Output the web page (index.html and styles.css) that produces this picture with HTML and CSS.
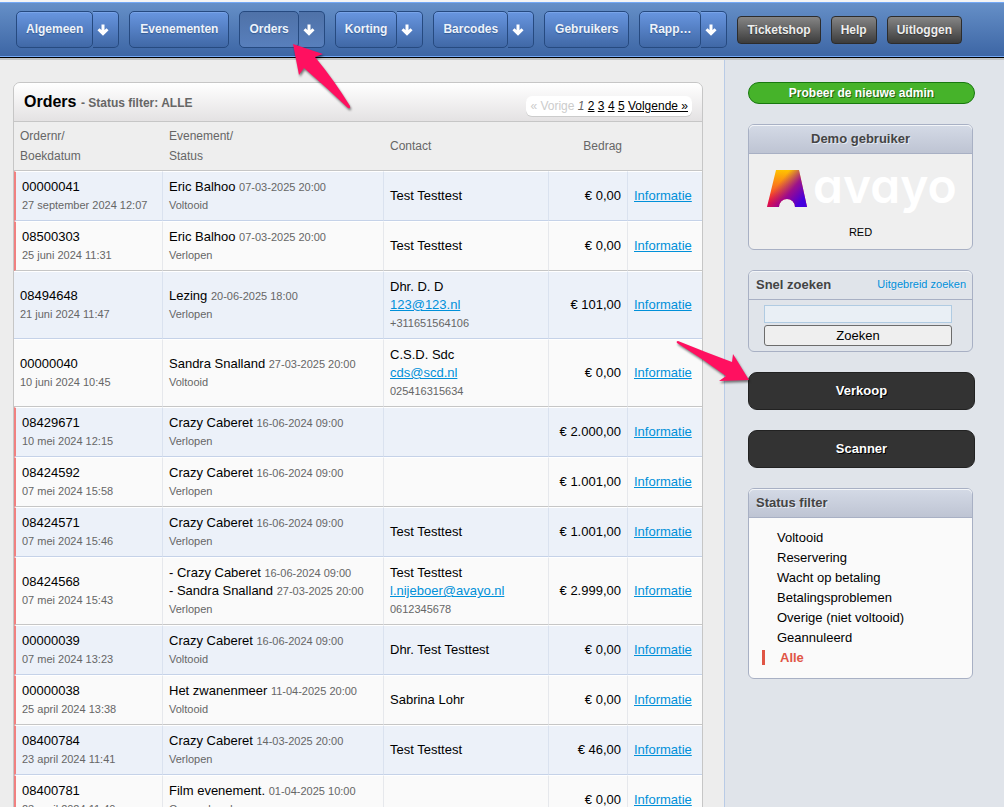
FILE: index.html
```html
<!DOCTYPE html>
<html lang="nl">
<head>
    <meta charset="UTF-8">
    <meta name="viewport" content="width=device-width, initial-scale=1.0">
    <title>Orders</title>
    <link rel="stylesheet" href="styles.css">
</head>
<body>
    <svg class="symbols" width="0" height="0">
        <symbol id="down" viewBox="0 0 12 12">
            <path d="M6 0.500v9M1.500 5.200L6 9.600L10.500 5.200" fill="none" stroke="#fff" stroke-width="3"/>
        </symbol>
    </svg>

    <nav class="topbar">
        <div class="menu"><a href="#">Algemeen</a><button aria-label="Algemeen menu"><svg><use href="#down"/></svg></button></div>
        <div class="menu single"><a href="#">Evenementen</a></div>
        <div class="menu active"><a href="#">Orders</a><button aria-label="Orders menu"><svg><use href="#down"/></svg></button></div>
        <div class="menu"><a href="#">Korting</a><button aria-label="Korting menu"><svg><use href="#down"/></svg></button></div>
        <div class="menu"><a href="#">Barcodes</a><button aria-label="Barcodes menu"><svg><use href="#down"/></svg></button></div>
        <div class="menu single"><a href="#">Gebruikers</a></div>
        <div class="menu"><a href="#">Rapp…</a><button aria-label="Rapportages menu"><svg><use href="#down"/></svg></button></div>
        <a class="dark" href="#">Ticketshop</a>
        <a class="dark" href="#">Help</a>
        <a class="dark" href="#">Uitloggen</a>
    </nav>

    <div class="page">
        <main>
            <section class="orders">
                <header>
                    <h1>Orders <small>- Status filter: ALLE</small></h1>
                    <div class="pages">
                        <span class="off">« Vorige</span>
                        <em>1</em>
                        <a href="#">2</a>
                        <a href="#">3</a>
                        <a href="#">4</a>
                        <a href="#">5</a>
                        <a href="#">Volgende »</a>
                    </div>
                </header>
                <table>
                    <colgroup>
                        <col class="c-order"><col><col class="c-contact"><col class="c-amount"><col class="c-info">
                    </colgroup>
                    <thead>
                        <tr>
                            <th>Ordernr/<br>Boekdatum</th>
                            <th>Evenement/<br>Status</th>
                            <th>Contact</th>
                            <th class="amount">Bedrag</th>
                            <th></th>
                        </tr>
                    </thead>
                    <tbody>
                        <tr class="red">
                            <td>00000041<br><small>27 september 2024 12:07</small></td>
                            <td>Eric Balhoo <small>07-03-2025 20:00</small><br><small>Voltooid</small></td>
                            <td>Test Testtest</td>
                            <td class="amount">€ 0,00</td>
                            <td><a href="#">Informatie</a></td>
                        </tr>
                        <tr class="red">
                            <td>08500303<br><small>25 juni 2024 11:31</small></td>
                            <td>Eric Balhoo <small>07-03-2025 20:00</small><br><small>Verlopen</small></td>
                            <td>Test Testtest</td>
                            <td class="amount">€ 0,00</td>
                            <td><a href="#">Informatie</a></td>
                        </tr>
                        <tr>
                            <td>08494648<br><small>21 juni 2024 11:47</small></td>
                            <td>Lezing <small>20-06-2025 18:00</small><br><small>Verlopen</small></td>
                            <td>Dhr. D. D<br><a href="#">123@123.nl</a><br><small>+311651564106</small></td>
                            <td class="amount">€ 101,00</td>
                            <td><a href="#">Informatie</a></td>
                        </tr>
                        <tr>
                            <td>00000040<br><small>10 juni 2024 10:45</small></td>
                            <td>Sandra Snalland <small>27-03-2025 20:00</small><br><small>Voltooid</small></td>
                            <td>C.S.D. Sdc<br><a href="#">cds@scd.nl</a><br><small>025416315634</small></td>
                            <td class="amount">€ 0,00</td>
                            <td><a href="#">Informatie</a></td>
                        </tr>
                        <tr class="red">
                            <td>08429671<br><small>10 mei 2024 12:15</small></td>
                            <td>Crazy Caberet <small>16-06-2024 09:00</small><br><small>Verlopen</small></td>
                            <td></td>
                            <td class="amount">€ 2.000,00</td>
                            <td><a href="#">Informatie</a></td>
                        </tr>
                        <tr class="red">
                            <td>08424592<br><small>07 mei 2024 15:58</small></td>
                            <td>Crazy Caberet <small>16-06-2024 09:00</small><br><small>Verlopen</small></td>
                            <td></td>
                            <td class="amount">€ 1.001,00</td>
                            <td><a href="#">Informatie</a></td>
                        </tr>
                        <tr class="red">
                            <td>08424571<br><small>07 mei 2024 15:46</small></td>
                            <td>Crazy Caberet <small>16-06-2024 09:00</small><br><small>Verlopen</small></td>
                            <td>Test Testtest</td>
                            <td class="amount">€ 1.001,00</td>
                            <td><a href="#">Informatie</a></td>
                        </tr>
                        <tr class="red">
                            <td>08424568<br><small>07 mei 2024 15:43</small></td>
                            <td>- Crazy Caberet <small>16-06-2024 09:00</small><br>- Sandra Snalland <small>27-03-2025 20:00</small><br><small>Verlopen</small></td>
                            <td>Test Testtest<br><a href="#">l.nijeboer@avayo.nl</a><br><small>0612345678</small></td>
                            <td class="amount">€ 2.999,00</td>
                            <td><a href="#">Informatie</a></td>
                        </tr>
                        <tr class="red">
                            <td>00000039<br><small>07 mei 2024 13:23</small></td>
                            <td>Crazy Caberet <small>16-06-2024 09:00</small><br><small>Voltooid</small></td>
                            <td>Dhr. Test Testtest</td>
                            <td class="amount">€ 0,00</td>
                            <td><a href="#">Informatie</a></td>
                        </tr>
                        <tr class="red">
                            <td>00000038<br><small>25 april 2024 13:38</small></td>
                            <td>Het zwanenmeer <small>11-04-2025 20:00</small><br><small>Voltooid</small></td>
                            <td>Sabrina Lohr</td>
                            <td class="amount">€ 0,00</td>
                            <td><a href="#">Informatie</a></td>
                        </tr>
                        <tr class="red">
                            <td>08400784<br><small>23 april 2024 11:41</small></td>
                            <td>Crazy Caberet <small>14-03-2025 20:00</small><br><small>Verlopen</small></td>
                            <td>Test Testtest</td>
                            <td class="amount">€ 46,00</td>
                            <td><a href="#">Informatie</a></td>
                        </tr>
                        <tr class="red">
                            <td>08400781<br><small>23 april 2024 11:40</small></td>
                            <td>Film evenement. <small>01-04-2025 10:00</small><br><small>Geannuleerd</small></td>
                            <td></td>
                            <td class="amount">€ 0,00</td>
                            <td><a href="#">Informatie</a></td>
                        </tr>
                    </tbody>
                </table>
            </section>
        </main>

        <aside>
            <a class="new-admin" href="#">Probeer de nieuwe admin</a>

            <section class="box user">
                <h2>Demo gebruiker</h2>
                <div class="logo">
                    <svg width="40" height="37" viewBox="0 0 40 37">
                        <defs>
                            <linearGradient id="warm" x1="0" y1="0" x2="0" y2="1">
                                <stop offset="0" stop-color="#ffc400"/>
                                <stop offset="0.500" stop-color="#f96a20"/>
                                <stop offset="0.900" stop-color="#ff1030"/>
                            </linearGradient>
                            <linearGradient id="cool" x1="0.300" y1="0.350" x2="0.900" y2="0.800">
                                <stop offset="0" stop-color="#8a1090" stop-opacity="0"/>
                                <stop offset="0.500" stop-color="#8a00a0" stop-opacity="0.850"/>
                                <stop offset="1" stop-color="#4400dd"/>
                            </linearGradient>
                        </defs>
                        <path d="M9 0H32L40 37H28A8 8 0 0 0 12 37H0Z" fill="url(#warm)"/>
                        <path d="M9 0H32L40 37H28A8 8 0 0 0 12 37H0Z" fill="url(#cool)"/>
                    </svg>
                    <span>avayo</span>
                </div>
                <p>RED</p>
            </section>

            <form class="box search">
                <h2><label for="q">Snel zoeken</label> <a href="#">Uitgebreid zoeken</a></h2>
                <div class="fields">
                    <input type="text" id="q">
                    <button type="button">Zoeken</button>
                </div>
            </form>

            <a class="big" href="#">Verkoop</a>
            <a class="big" href="#">Scanner</a>

            <section class="box filter">
                <h2>Status filter</h2>
                <ul>
                    <li><a href="#">Voltooid</a></li>
                    <li><a href="#">Reservering</a></li>
                    <li><a href="#">Wacht op betaling</a></li>
                    <li><a href="#">Betalingsproblemen</a></li>
                    <li><a href="#">Overige (niet voltooid)</a></li>
                    <li><a href="#">Geannuleerd</a></li>
                    <li class="current"><a href="#">Alle</a></li>
                </ul>
            </section>
        </aside>
    </div>

    <svg class="pointer to-orders" width="64" height="72" viewBox="290 40 64 72">
        <path d="M293 44L323 54L315 57Q334 80 350 106Q351 109 348 108Q326 87 304 68L299 75Z"/>
    </svg>
    <svg class="pointer to-sales" width="80" height="48" viewBox="673 338 80 48">
        <path d="M678 341Q705 352 732 362L733 354L749 380L719 381L726 376Q703 359 677 343Q676 341 678 341Z"/>
    </svg>
</body>
</html>
```
FILE: styles.css
```css
* {
    box-sizing: border-box;
}
body {
    margin: 0;
    height: 100vh;
    overflow: hidden;
    position: relative;
    background: #ededed;
    font: 13px/18px "Liberation Sans", Arial, sans-serif;
    color: #000;
}
a {
    color: #0090d9;
}
.symbols {
    position: absolute;
}

/* top bar */
.topbar {
    position: relative;
    display: flex;
    align-items: center;
    gap: 10px;
    height: 58px;
    padding: 0 16px;
    border-top: 2px solid #f4f4f4;
    border-bottom: 1px solid #000;
    background: linear-gradient(#6690c8, #3c65a4);
    box-shadow: inset 0 1px #73a8f5, inset 0 -1px #73a8f5, 0 2px #c3c5c5;
    font-size: 12px;
}
.menu {
    display: flex;
    height: 37px;
}
.menu a, .menu button {
    border: 1px solid #264a80;
    border-radius: 5px;
    background: linear-gradient(#6896e0, #4068a6);
    box-shadow: inset 0 1px #79a4e8;
}
.menu a {
    padding: 0 9px;
    line-height: 35px;
    color: #eef3fb;
    font-weight: bold;
    text-decoration: none;
    text-shadow: 0 1px 1px #345a92;
}
.menu.single a {
    padding: 0 10px;
}
.menu button {
    width: 26px;
    padding: 0 0 0 4px;
    border-left: 0;
    border-radius: 0 5px 5px 0;
}
.menu svg {
    display: block;
    width: 12px;
    height: 12px;
}
.menu.active a, .menu.active button {
    background: linear-gradient(#4f72a8, #587fbc);
    box-shadow: none;
}
.dark {
    height: 28px;
    padding: 0 9px;
    border: 1px solid #2c2c2c;
    border-radius: 4px;
    background: linear-gradient(#858585, #3c3c3c);
    color: #eee;
    font-weight: bold;
    line-height: 26px;
    text-decoration: none;
    text-shadow: 0 1px 1px #333;
}

/* columns */
.page {
    display: flex;
    min-height: 100vh;
}
main {
    flex: 1;
    padding: 24px 21px 0 13px;
}
aside {
    width: 280px;
    padding: 24px 29px 0 23px;
    border-left: 1px solid #b9cbe6;
    background: #e0e4ea;
}

/* orders */
.orders {
    border: 1px solid #c6c6c6;
    border-radius: 7px 7px 0 0;
}
.orders header {
    display: flex;
    justify-content: space-between;
    align-items: flex-start;
    height: 39px;
    padding: 0 10px;
    border-bottom: 1px solid #c6c6c6;
    border-radius: 6px 6px 0 0;
    background: linear-gradient(#fff, #e4e2e3);
}
h1 {
    margin: 0;
    font-size: 16px;
    line-height: 38px;
}
h1 small {
    font-size: 12px;
    color: #666;
}
.pages {
    margin-top: 13px;
    padding: 0 4px;
    border-radius: 6px;
    background: #fff;
    box-shadow: 0 1px #ccc;
    font-size: 12px;
    line-height: 20px;
}
.pages a {
    color: #000;
}
.pages .off {
    color: #ccc;
}
.pages em {
    color: #666;
}
table {
    width: 100%;
    table-layout: fixed;
    border-spacing: 0;
}
.c-order {
    width: 149px;
}
.c-contact {
    width: 165px;
}
.c-amount {
    width: 79px;
}
.c-info {
    width: 74px;
}
th {
    padding: 4px 6px;
    border-bottom: 1px solid #c6c6c6;
    background: #eee;
    color: #666;
    font-size: 12px;
    font-weight: normal;
    line-height: 20px;
    text-align: left;
}
td {
    padding: 6px;
    border-top: 1px solid #fff;
    border-right: 1px solid #e6e8ec;
    border-bottom: 1px solid #c6c6c6;
    background: #fafafa;
    white-space: nowrap;
}
td:last-child {
    border-right: 0;
}
tbody tr:nth-child(odd) td {
    border-right-color: #dae2ef;
    border-bottom-color: #c5d2e8;
    background: #ecf1f9;
}
td small {
    color: #666;
    font-size: 11px;
}
.red td:first-child {
    border-left: 2px solid #f08080;
}
.amount {
    text-align: right;
}

/* sidebar */
.new-admin {
    display: block;
    height: 22px;
    border: 1px solid #18780f;
    border-radius: 11px;
    background: #46b32a;
    color: #fff;
    font-size: 12px;
    font-weight: bold;
    line-height: 20px;
    text-align: center;
    text-decoration: none;
    text-shadow: 1px 1px #24610f;
}
.box {
    margin: 20px 2px 20px 0;
    border: 1px solid #a8b0c4;
    border-radius: 6px;
}
.box h2 {
    margin: 0;
    padding: 0 7px;
    border-bottom: 1px solid #a8b0c4;
    border-radius: 5px 5px 0 0;
    background: linear-gradient(#d4dae6, #bec4d3);
    box-shadow: inset 0 1px #f3f5f8;
    color: #444;
    font-size: 13px;
    line-height: 28px;
    text-shadow: 1px 1px #e4e9f2;
}
.user {
    background: #efefef;
    text-align: center;
}
.logo {
    display: flex;
    align-items: center;
    gap: 6px;
    height: 69px;
    padding-left: 18px;
}
.logo span {
    padding-bottom: 6px;
    color: #fff;
    font: 600 48px/60px Inter, sans-serif;
    font-feature-settings: "cv11";
}
.user p {
    margin: 0;
    padding-bottom: 8px;
    font-size: 11px;
}
.box.search h2 {
    display: flex;
    justify-content: space-between;
    padding-right: 6px;
    background: none;
}
.search h2 a {
    font-size: 11px;
    font-weight: normal;
    line-height: 26px;
    text-decoration: none;
}
.fields {
    padding: 5px 20px 5px 15px;
}
.search input, .search button {
    display: block;
    width: 100%;
}
.search input {
    height: 18px;
    border: 1px solid #b0cbe2;
    background: #e9eff5;
}
.search button {
    height: 21px;
    margin-top: 2px;
    padding: 0;
    border: 1px solid #6c6c6c;
    border-radius: 3px;
    background: #efefef;
    font: inherit;
}
.big {
    display: block;
    height: 38px;
    margin-top: 20px;
    border: 1px solid #222;
    border-radius: 9px;
    background: #333;
    color: #fff;
    font-weight: bold;
    line-height: 36px;
    text-align: center;
    text-decoration: none;
    text-shadow: 1px 1px #000;
}
.filter {
    background: #fafafa;
}
.filter ul {
    margin: 0;
    padding: 10px 13px 11px;
    list-style: none;
}
.filter li {
    padding-left: 15px;
    line-height: 20px;
}
.filter li a {
    color: #000;
    text-decoration: none;
}
.filter .current {
    height: 15px;
    margin: 2px 0;
    border-left: 3px solid #e05545;
    font-weight: bold;
    line-height: 15px;
}
.filter .current a {
    color: #e05545;
}

/* pink arrows on top of the page */
.pointer {
    position: absolute;
    fill: #ff1060;
    filter: drop-shadow(1px 2px 1px rgba(0, 0, 0, 0.5));
    pointer-events: none;
}
.to-orders {
    left: 290px;
    top: 40px;
}
.to-sales {
    right: 251px;
    top: 338px;
}
```
